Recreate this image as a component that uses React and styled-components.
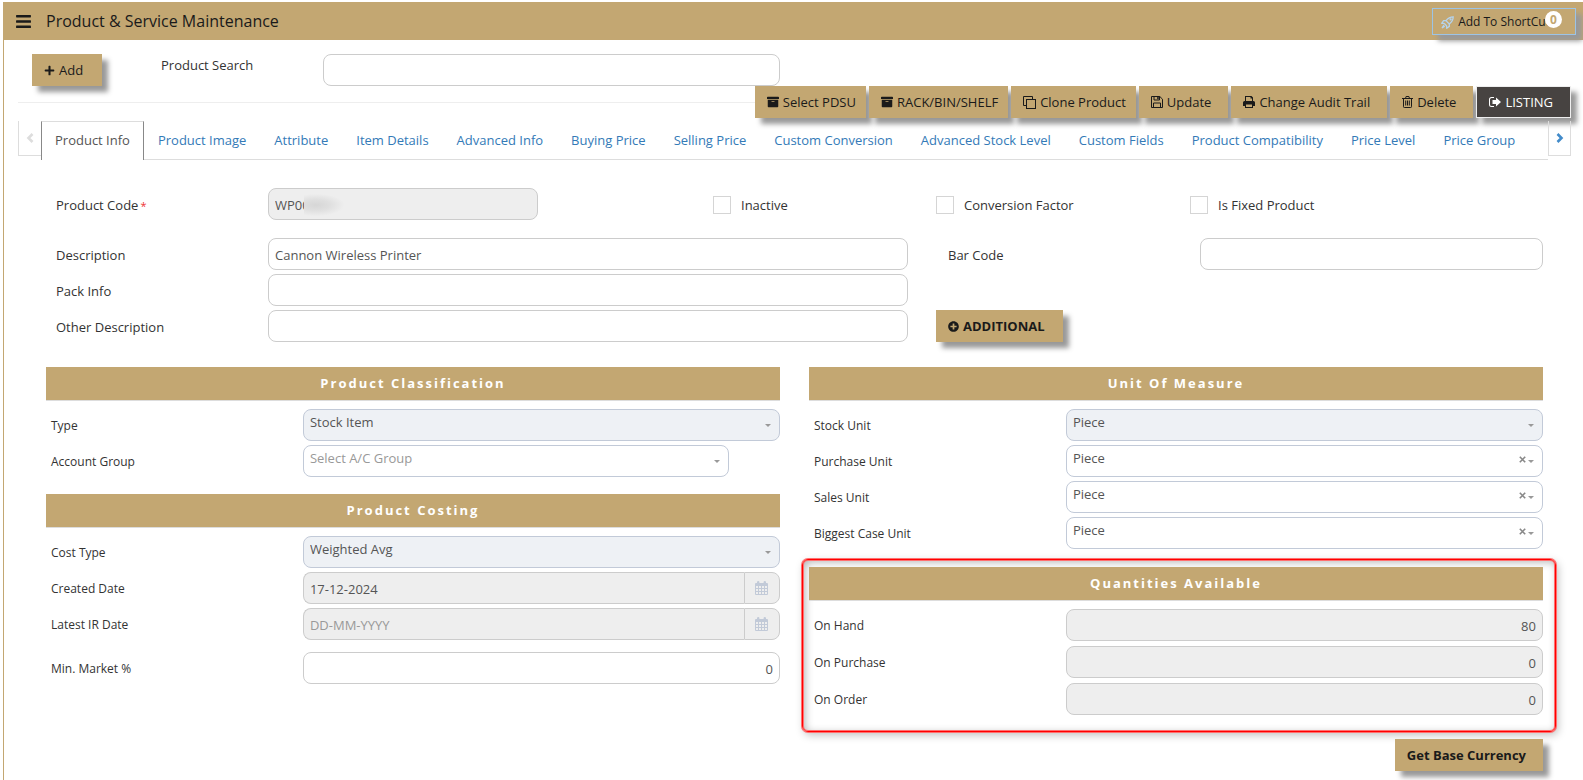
import React from "react"
import styled, { createGlobalStyle } from "styled-components"
import { FaBars, FaPlus, FaPlusCircle, FaArchive } from "react-icons/fa"

const GlobalStyle = createGlobalStyle`
  * {
    box-sizing: border-box;
  }

  body {
    margin: 0;
    background: #fff;
    color: #333;
    font: 13px/18px "Open Sans", "Noto Sans", sans-serif;
  }

  button, input, select {
    font: inherit;
    margin: 0;
  }
`

const Page = styled.div`
  margin: 2px 0 0 3px;
  min-height: calc(100vh - 2px);
  border-left: 1px solid #c3a772;
`

const Header = styled.header`
  display: flex;
  align-items: center;
  height: 38px;
  padding: 0 7px 0 11px;
  background: #c3a772;
  color: #1a1a1a;
`

const MenuButton = styled.button`
  display: flex;
  padding: 0;
  border: 0;
  background: none;
  color: inherit;
`

const Title = styled.h1`
  flex: 1;
  margin: 0 0 0 14px;
  font-size: 16px;
  font-weight: 400;
`

const Button = styled.button`
  display: flex;
  align-items: center;
  gap: 4px;
  height: 32px;
  padding: 0 ${props => props.$right || 10}px 0 12px;
  border: ${props => (props.$dark ? "1px solid #eee" : "0")};
  background: ${props => (props.$dark ? "#474341" : "#c3a772")};
  color: ${props => (props.$dark ? "#fff" : "#1a1a1a")};
  font-weight: ${props => (props.$bold ? 700 : 400)};
  white-space: nowrap;
  box-shadow: 6px 6px 5px #999;
`

const ShortcutButton = styled(Button)`
  position: relative;
  height: 27px;
  padding: 2px 25px 0 8px;
  border: 1px solid #9cc4e6;
  font-size: 12px;
`

const Badge = styled.span`
  position: absolute;
  top: 2px;
  right: 13px;
  width: 17px;
  height: 17px;
  border-radius: 50%;
  background: #fff;
  color: #c3a772;
  font-weight: 700;
  line-height: 17px;
  text-align: center;
`

const Content = styled.main`
  padding: 14px 12px 8px 14px;
`

const SearchBar = styled.div`
  display: grid;
  grid-template-columns: 129fr 162fr 457fr 791fr;
  align-items: start;
  padding-left: 14px;

  button {
    justify-self: start;
  }
`

const Input = styled.input`
  width: 100%;
  min-width: 0;
  height: 32px;
  padding: 2px 6px 0;
  border: 1px solid #ccc;
  border-radius: 8px;
  background: ${props => (props.$muted ? "#eee" : "#fff")};
  color: #555;
  text-align: ${props => (props.$number ? "right" : "left")};
  outline: 0;

  &::placeholder {
    color: #999;
    opacity: 1;
  }
`

const Toolbar = styled.div`
  display: flex;
  gap: 3px;

  &::before {
    content: "";
    flex: 1;
    height: 16px;
    margin-right: -3px;
    border-bottom: 1px solid #eee;
  }
`

const TabBar = styled.nav`
  display: flex;
  align-items: flex-start;
  margin-top: 3px;
`

const TabArrow = styled.button`
  display: flex;
  justify-content: center;
  width: 23px;
  height: 35px;
  padding: 12px 0 0;
  border: 1px solid #ddd;
  border-width: ${props => (props.$end ? "0 1px 1px" : "0 0 1px 1px")};
  background: none;
  color: ${props => (props.$end ? "#428bca" : "#ddd")};
`

const TabList = styled.div`
  display: flex;
  flex: 1;
  min-width: 0;
  height: 39px;
  border-bottom: 1px solid #ddd;
`

const Tab = styled.a`
  height: 39px;
  padding: 9px 13px 0;
  border: 1px solid transparent;
  border-bottom: 0;
  color: #337ab7;
  text-decoration: none;
  white-space: nowrap;

  &[aria-current] {
    border-color: #ddd #888 #fff;
    background: #fff;
    color: #555;
  }
`

const Form = styled.form`
  padding: 28px 28px 0;
`

const CodeRow = styled.div`
  display: grid;
  grid-template-columns: 222fr 270fr 175fr 223fr 254fr 353fr;
  align-items: center;
  margin-bottom: 18px;
`

const Label = styled.label`
  padding-top: 2px;
  padding-left: ${props => props.$indent || 0}px;
  font-size: ${props => (props.$small ? 12 : 13)}px;
`

const Required = styled.span`
  margin-left: 2px;
  color: #e33;
  font-size: 11px;
`

const CodeField = styled.div`
  position: relative;
`

const Smudge = styled.span`
  position: absolute;
  top: 6px;
  left: 36px;
  width: 40px;
  height: 22px;
  background: radial-gradient(ellipse at 30% 50%, #d6d6d6 0, #dfdfdf 35%, #eee 72%);
`

const CheckLabel = styled.label`
  display: flex;
  align-items: center;
  gap: 10px;
  padding-top: 2px;
`

const CheckBox = styled.input`
  appearance: none;
  width: 18px;
  height: 18px;
  margin: 0;
  border: 1px solid #d5d5d5;
  background: #fff;
`

const DescriptionGrid = styled.div`
  display: grid;
  grid-template-columns: 222fr 640fr 292fr 343fr;
  align-items: center;
  row-gap: 4px;
`

const AdditionalCell = styled.div`
  grid-column: 3;
  padding-left: 28px;
`

const Columns = styled.div`
  display: grid;
  grid-template-columns: 1fr 1fr;
  gap: 29px;
  margin-top: 25px;
`

const Section = styled.section`
  margin-bottom: ${props => (props.$last ? 0 : 17)}px;
`

const Highlight = styled.div`
  margin: -7px -13px 7px -7px;
  padding: 7px 12px 16px 6px;
  border: 1px solid #f00;
  border-radius: 6px;
  box-shadow: 0 0 0 1px #ff7070, 2px 3px 9px rgba(0, 0, 0, .25),
    inset 0 0 0 1px #ff7070, inset 2px 2px 8px rgba(0, 0, 0, .3);
`

const SectionTitle = styled.h2`
  height: 34px;
  margin: 0 0 8px;
  border-bottom: 1px solid #ddd;
  background: #c3a772;
  color: #fff;
  font-size: 13px;
  font-weight: 700;
  line-height: 32px;
  letter-spacing: 2px;
  text-align: center;
`

// the first row's margin collapses into the title's
const FieldRow = styled.div`
  display: grid;
  grid-template-columns: 35% 65%;
  align-items: center;
  margin-top: ${props => props.$space || 4}px;
`

const SelectBox = styled.div`
  position: relative;
  width: ${props => (props.$narrow ? "calc(100% - 51px)" : "100%")};
`

const Select = styled.select`
  appearance: none;
  display: block;
  width: 100%;
  height: 32px;
  padding: 0 40px 6px 6px;
  border: 1px solid #c2cad8;
  border-radius: 8px;
  background: ${props => (props.disabled ? "#eef1f5" : "#fff")};
  color: ${props => (props.$empty ? "#999" : "#555")};
  opacity: 1;
`

const Caret = styled.span`
  position: absolute;
  top: 15px;
  right: 9px;
  border: 3px solid transparent;
  border-top-color: #999;
  border-bottom: 0;
  pointer-events: none;
`

const ClearButton = styled.button`
  position: absolute;
  top: 11px;
  right: 17px;
  display: flex;
  padding: 0;
  border: 0;
  background: none;
  color: #888;
`

const DateGroup = styled.div`
  display: flex;

  input {
    border-right: 0;
    border-radius: 8px 0 0 8px;
  }
`

const DateButton = styled.button`
  display: flex;
  align-items: center;
  justify-content: center;
  flex: none;
  width: 36px;
  border: 1px solid #ccc;
  border-radius: 0 8px 8px 0;
  background: #eee;
  color: #c2cad8;
`

const FormEnd = styled.div`
  display: flex;
  justify-content: flex-end;
`

const RocketIcon = () => (
  <svg width="13" height="13" viewBox="0 0 13 13" fill="none" stroke="#b5d4ee" strokeWidth="1.3">
    <path d="M12.2.8C9 .8 6.900 2.200 5 4.700L8.300 8C10.800 6.100 12.200 4 12.200.8Z" />
    <path d="M5.200 4.700H2.600L.8 7.200l2.500.3M8.300 7.800v2.600l-2.500 1.800-.3-2.500M3.300 7.500l2.200 2.200" />
    <path d="M3 9.200 1 11.900l2.800-1.700" />
    <circle cx="9.600" cy="3.400" r=".5" />
  </svg>
)

const CloneIcon = () => (
  <svg width="13" height="13" viewBox="0 0 13 13" fill="none" stroke="currentColor">
    <path d="M3 9.500H.5v-9h9V3" />
    <rect x="3.500" y="3.500" width="9" height="9" />
  </svg>
)

const SaveIcon = () => (
  <svg width="12" height="12" viewBox="0 0 12 12" fill="none" stroke="currentColor">
    <path d="M.5.5h8.300l2.700 2.700v8.300H.5Z" />
    <path d="M3 .5v3.500h5.500V.5M2.500 11.500V7h7v4.500" />
    <path d="M6.200.8h1.500v2.400H6.200Z" fill="currentColor" stroke="none" />
  </svg>
)

const PrintIcon = () => (
  <svg width="12" height="12" viewBox="0 0 12 12" fill="currentColor">
    <path fillRule="evenodd" d="M2 5V0h6.500L10 1.500V5H9V2.500H7.500V1H3v4ZM1.500 5h9A1.500 1.500 0 0 1 12 6.500V10h-2v2H2v-2H0V6.500A1.500 1.500 0 0 1 1.500 5ZM3 8.500V11h6V8.500Z" />
  </svg>
)

const TrashIcon = () => (
  <svg width="11" height="12" viewBox="0 0 11 12" fill="none" stroke="currentColor">
    <path d="M0 2.500h11M3.500 2.500l.6-2h2.800l.6 2M1.500 2.500v8.200q0 .8.8.8h6.400q.8 0 .8-.8V2.500M3.700 4.500v5M5.500 4.500v5M7.300 4.500v5" />
  </svg>
)

const ListingIcon = () => (
  <svg width="12" height="11" viewBox="0 0 12 11" fill="currentColor">
    <path d="M5 1H2.500A1.500 1.500 0 0 0 1 2.500v5A1.500 1.500 0 0 0 2.500 9H5v1H2.500A2.500 2.500 0 0 1 0 7.500v-5A2.500 2.500 0 0 1 2.500 0H5Z" />
    <path d="M7 .6 12 5 7 9.400V7H3.500V3H7Z" />
  </svg>
)

const CalendarIcon = () => (
  <svg width="13" height="14" viewBox="0 0 13 14" fill="currentColor">
    <path fillRule="evenodd" d="M1 2h1V1.200a1.200 1.200 0 0 1 2.400 0V2h4.200v-.8a1.200 1.200 0 0 1 2.400 0V2h1q1 0 1 1v10q0 1-1 1H1q-1 0-1-1V3q0-1 1-1ZM1 5v2h2V5ZM4 5v2h2V5ZM7 5v2h2V5ZM10 5v2h2V5ZM1 8v2h2V8ZM4 8v2h2V8ZM7 8v2h2V8ZM10 8v2h2V8ZM1 11v2h2v-2ZM4 11v2h2v-2ZM7 11v2h2v-2ZM10 11v2h2v-2Z" />
  </svg>
)

const Chevron = ({ d }) => (
  <svg width="8" height="10" viewBox="0 0 8 10" fill="none" stroke="currentColor" strokeWidth="2.600">
    <path d={d} />
  </svg>
)

const tabs = [
  "Product Info", "Product Image", "Attribute", "Item Details", "Advanced Info",
  "Buying Price", "Selling Price", "Custom Conversion", "Advanced Stock Level",
  "Custom Fields", "Product Compatibility", "Price Level", "Price Group",
]

const actions = [
  { name: "Select PDSU", icon: <FaArchive size={12} /> },
  { name: "RACK/BIN/SHELF", icon: <FaArchive size={12} /> },
  { name: "Clone Product", icon: <CloneIcon /> },
  { name: "Update", icon: <SaveIcon />, right: 17 },
  { name: "Change Audit Trail", icon: <PrintIcon />, right: 17 },
  { name: "Delete", icon: <TrashIcon />, right: 17 },
  { name: "LISTING", icon: <ListingIcon />, right: 17, dark: true },
]

let TextField = ({ id, label, space = 5, ...rest }) => (
  <FieldRow $space={space}>
    <Label htmlFor={id} $indent={5} $small>{label}</Label>
    <Input id={id} {...rest} />
  </FieldRow>
)

let SelectField = ({ id, label, value, clearable, narrow, ...rest }) => (
  <FieldRow>
    <Label htmlFor={id} $indent={5} $small>{label}</Label>
    <SelectBox $narrow={narrow}>
      <Select id={id} {...rest}>
        <option>{value}</option>
      </Select>
      {clearable && (
        <ClearButton type="button" aria-label={"Clear " + label}>
          <svg width="7" height="7" viewBox="0 0 7 7" stroke="currentColor" strokeWidth="1.600">
            <path d="M.8.8l5.400 5.400M6.200.8.8 6.200" />
          </svg>
        </ClearButton>
      )}
      <Caret />
    </SelectBox>
  </FieldRow>
)

let DateField = ({ id, label, ...rest }) => (
  <FieldRow>
    <Label htmlFor={id} $indent={5} $small>{label}</Label>
    <DateGroup>
      <Input id={id} $muted readOnly {...rest} />
      <DateButton type="button" aria-label={"Pick " + label}><CalendarIcon /></DateButton>
    </DateGroup>
  </FieldRow>
)

let Check = ({ children }) => (
  <CheckLabel>
    <CheckBox type="checkbox" />
    {children}
  </CheckLabel>
)

let App = () => (
  <Page>
    <GlobalStyle />
    <Header>
      <MenuButton aria-label="Menu"><FaBars size={17} /></MenuButton>
      <Title>Product & Service Maintenance</Title>
      <ShortcutButton>
        <RocketIcon />
        Add To ShortCut
        <Badge>0</Badge>
      </ShortcutButton>
    </Header>
    <Content>
      <SearchBar>
        <Button $right={19}><FaPlus size={11} />Add</Button>
        <Label htmlFor="search">Product Search</Label>
        <Input id="search" />
      </SearchBar>
      <Toolbar>
        {actions.map(item => (
          <Button key={item.name} $right={item.right} $dark={item.dark}>
            {item.icon}
            {item.name}
          </Button>
        ))}
      </Toolbar>
      <TabBar>
        <TabArrow aria-label="Previous tabs"><Chevron d="M6.500 1 2.500 5l4 4" /></TabArrow>
        <TabList>
          {tabs.map((name, i) => (
            <Tab key={name} href="#" aria-current={i === 0 ? "page" : undefined}>{name}</Tab>
          ))}
        </TabList>
        <TabArrow $end aria-label="Next tabs"><Chevron d="M1.500 1l4 4-4 4" /></TabArrow>
      </TabBar>
      <Form>
        <CodeRow>
          <Label htmlFor="code" $indent={10}>Product Code<Required>*</Required></Label>
          <CodeField>
            <Input id="code" $muted readOnly defaultValue="WP00" />
            <Smudge />
          </CodeField>
          <span />
          <Check>Inactive</Check>
          <Check>Conversion Factor</Check>
          <Check>Is Fixed Product</Check>
        </CodeRow>
        <DescriptionGrid>
          <Label htmlFor="description" $indent={10}>Description</Label>
          <Input id="description" defaultValue="Cannon Wireless Printer" />
          <Label htmlFor="barcode" $indent={40}>Bar Code</Label>
          <Input id="barcode" />
          <Label htmlFor="pack" $indent={10}>Pack Info</Label>
          <Input id="pack" />
          <span />
          <span />
          <Label htmlFor="other" $indent={10}>Other Description</Label>
          <Input id="other" />
          <AdditionalCell>
            <Button type="button" $bold $right={18}><FaPlusCircle size={11} />ADDITIONAL</Button>
          </AdditionalCell>
        </DescriptionGrid>
        <Columns>
          <div>
            <Section>
              <SectionTitle>Product Classification</SectionTitle>
              <SelectField id="type" label="Type" value="Stock Item" disabled />
              <SelectField id="group" label="Account Group" value="Select A/C Group" narrow $empty />
            </Section>
            <Section $last>
              <SectionTitle>Product Costing</SectionTitle>
              <SelectField id="cost" label="Cost Type" value="Weighted Avg" disabled />
              <DateField id="created" label="Created Date" defaultValue="17-12-2024" />
              <DateField id="latest" label="Latest IR Date" placeholder="DD-MM-YYYY" />
              <TextField id="market" label="Min. Market %" defaultValue="0" $number space={12} />
            </Section>
          </div>
          <div>
            <Section>
              <SectionTitle>Unit Of Measure</SectionTitle>
              <SelectField id="stock" label="Stock Unit" value="Piece" disabled />
              <SelectField id="purchase" label="Purchase Unit" value="Piece" clearable />
              <SelectField id="sales" label="Sales Unit" value="Piece" clearable />
              <SelectField id="biggest" label="Biggest Case Unit" value="Piece" clearable />
            </Section>
            <Highlight>
              <Section $last>
                <SectionTitle>Quantities Available</SectionTitle>
                <TextField id="onhand" label="On Hand" defaultValue="80" $muted $number readOnly />
                <TextField id="onpurchase" label="On Purchase" defaultValue="0" $muted $number readOnly />
                <TextField id="onorder" label="On Order" defaultValue="0" $muted $number readOnly />
              </Section>
            </Highlight>
            <FormEnd>
              <Button type="button" $bold $right={17}>Get Base Currency</Button>
            </FormEnd>
          </div>
        </Columns>
      </Form>
    </Content>
  </Page>
)

export default App
